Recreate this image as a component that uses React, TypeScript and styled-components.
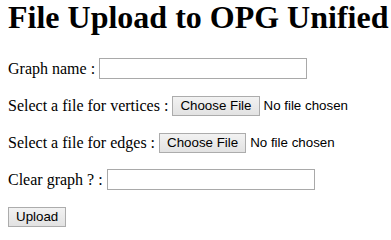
import React, { useState } from "react";
import styled, { createGlobalStyle } from "styled-components";

const GlobalStyle = createGlobalStyle`
  html, body {
    margin: 0;
    padding: 0;
    background: #fff;
    color: #000;
  }
  body {
    font-family: "Liberation Serif", "Times New Roman", serif;
    font-size: 16px;
  }
`;

const StPage = styled.main`
  padding: 0 8px;
`;

const StTitle = styled.h1`
  margin: 0 0 23px;
  font-size: 32px;
  font-weight: bold;
  line-height: 35px;
  white-space: nowrap;
`;

const StForm = styled.form`
  display: flex;
  flex-direction: column;
  align-items: flex-start;
  gap: 16px;
`;

const StRow = styled.div`
  display: flex;
  align-items: center;
  height: 21px;
`;

const StLabel = styled.label`
  font-size: 16px;
  line-height: 18px;
  white-space: nowrap;
`;

const StTextInput = styled.input`
  box-sizing: border-box;
  width: 208px;
  height: 21px;
  margin: 0 0 0 4px;
  padding: 1px 2px;
  border: 1px solid #a9a9a9;
  background: #fff;
  font-family: "Liberation Sans", Arial, sans-serif;
  font-size: 13.33px;
  outline: none;
`;

const StButton = styled.button<{ $gap?: number }>`
  box-sizing: border-box;
  height: 20px;
  margin: 0 0 0 ${(p) => p.$gap ?? 0}px;
  padding: 0 7px;
  border: 1px solid #acacac;
  border-radius: 0;
  background: linear-gradient(#f2f2f2, #e2e2e2);
  color: #000;
  font-family: "Liberation Sans", Arial, sans-serif;
  font-size: 13.33px;
  line-height: 18px;
  white-space: nowrap;
  cursor: default;
`;

const StHiddenFile = styled.input`
  display: none;
`;

const StFileName = styled.span`
  margin-left: 4px;
  font-family: "Liberation Sans", Arial, sans-serif;
  font-size: 13.33px;
  white-space: nowrap;
`;

function FileField({ label, id }: { label: string; id: string }) {
  const [name, setName] = useState("");
  return (
    <StRow>
      <StLabel htmlFor={id}>{label}</StLabel>
      <StHiddenFile
        id={id}
        type="file"
        onChange={(e) => setName(e.target.files?.[0]?.name ?? "")}
      />
      <StButton
        type="button"
        $gap={4}
        onClick={() => document.getElementById(id)?.click()}
      >
        Choose File
      </StButton>
      <StFileName>{name || "No file chosen"}</StFileName>
    </StRow>
  );
}

export default function App() {
  return (
    <StPage>
      <GlobalStyle />
      <StTitle>File Upload to OPG Unified</StTitle>
      <StForm onSubmit={(e) => e.preventDefault()}>
        <StRow>
          <StLabel htmlFor="graphName">Graph name :</StLabel>
          <StTextInput id="graphName" type="text" />
        </StRow>
        <FileField id="vertices" label="Select a file for vertices :" />
        <FileField id="edges" label="Select a file for edges :" />
        <StRow>
          <StLabel htmlFor="clearGraph">Clear graph ? :</StLabel>
          <StTextInput id="clearGraph" type="text" />
        </StRow>
        <StRow>
          <StButton type="submit">Upload</StButton>
        </StRow>
      </StForm>
    </StPage>
  );
}
